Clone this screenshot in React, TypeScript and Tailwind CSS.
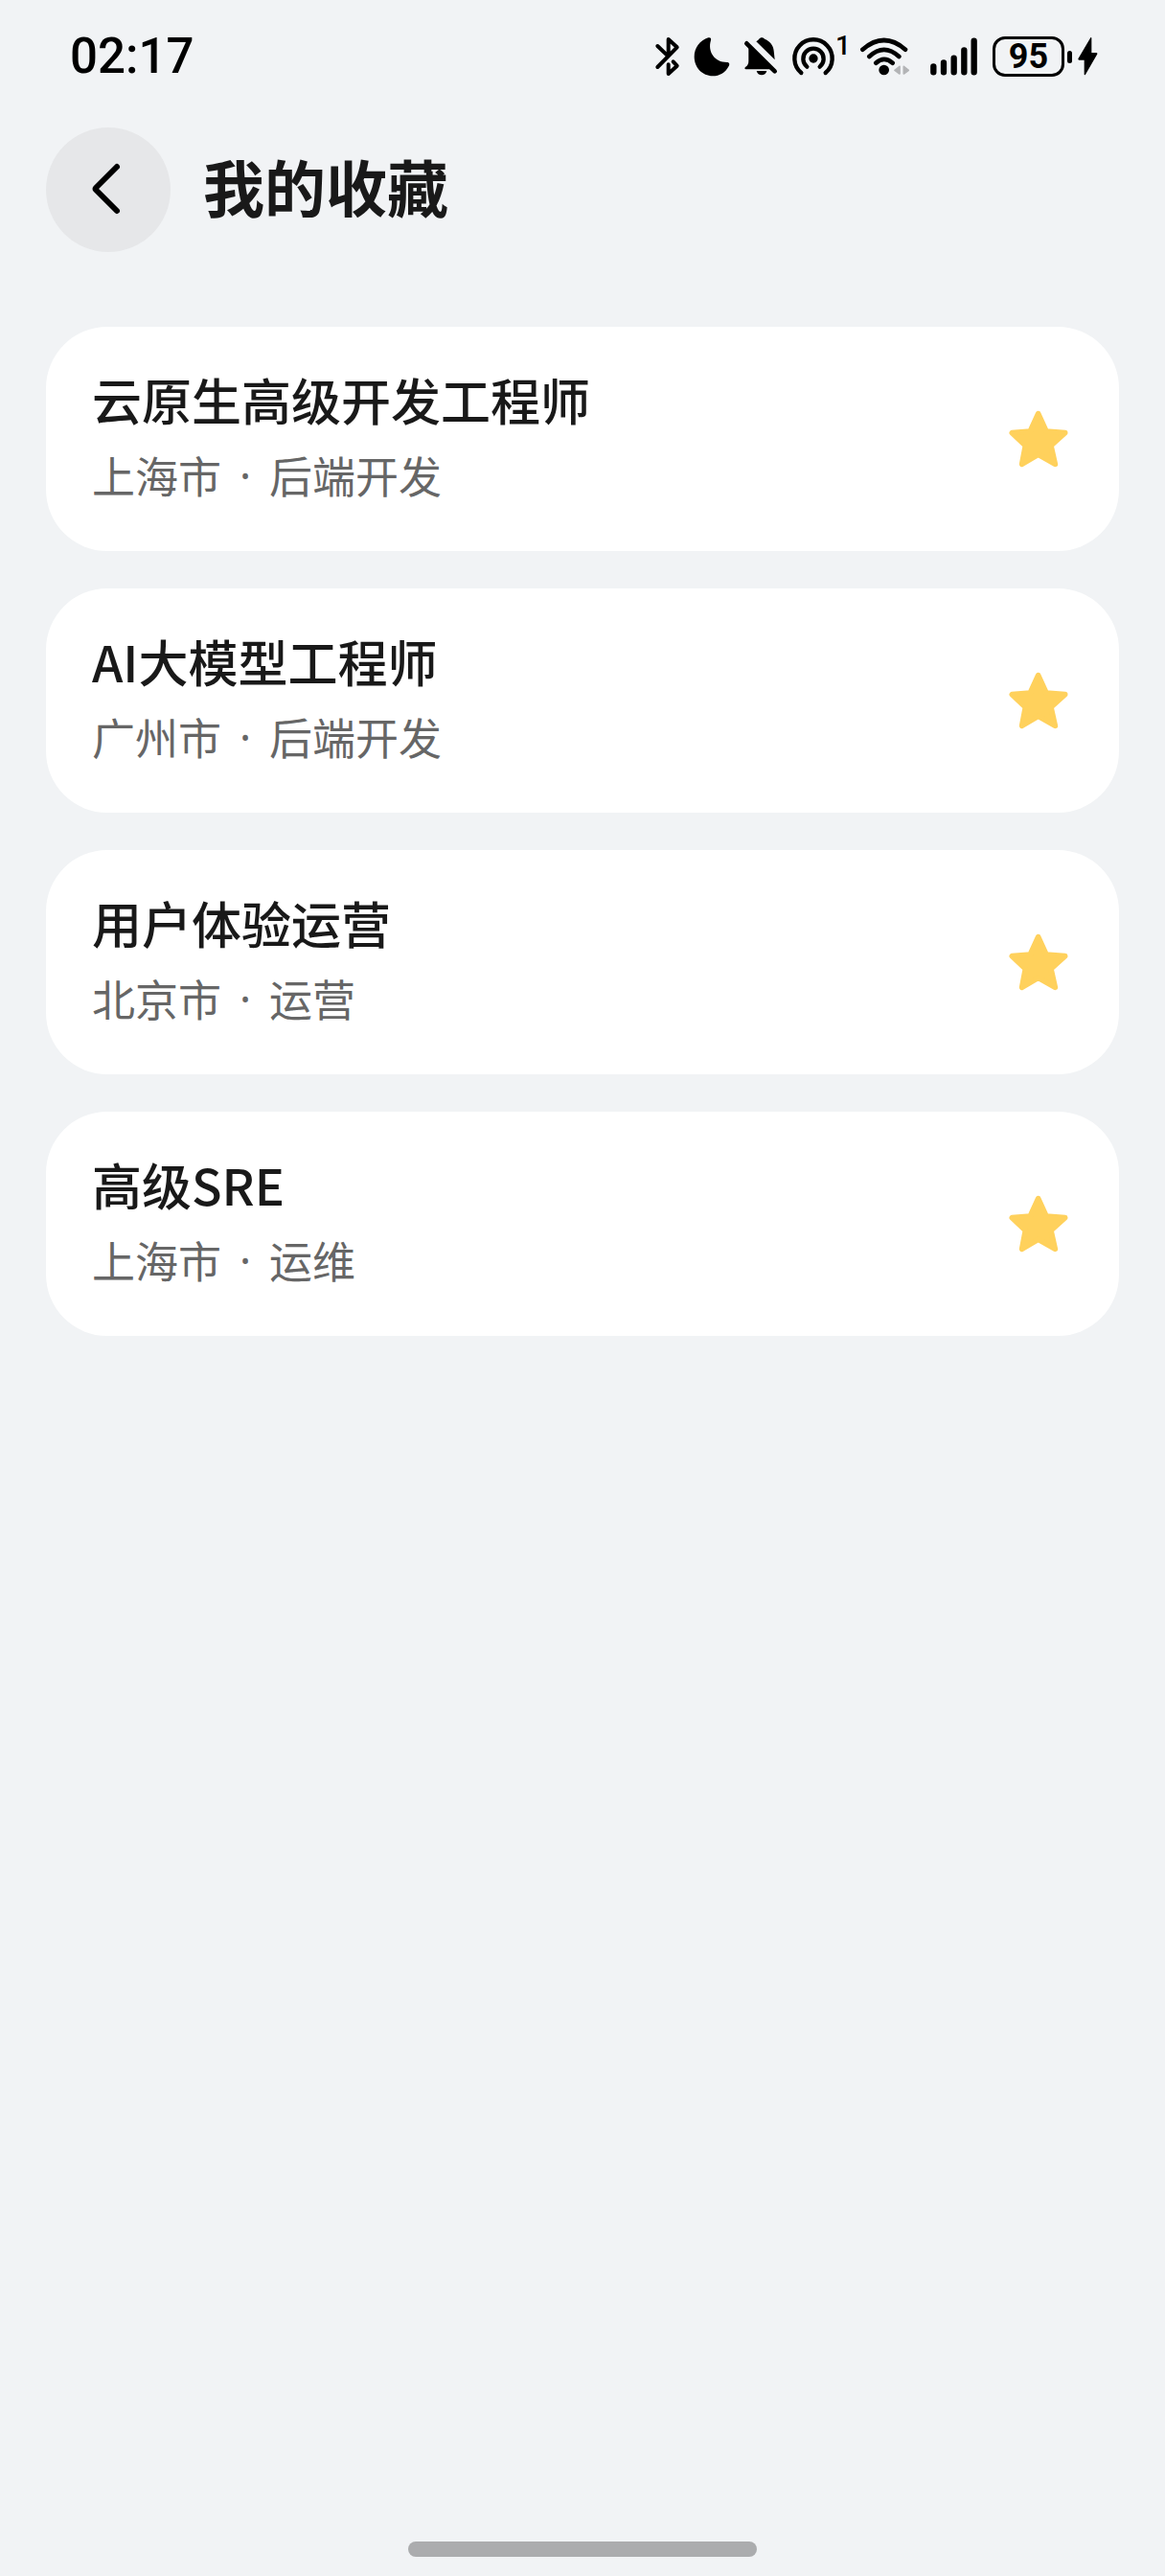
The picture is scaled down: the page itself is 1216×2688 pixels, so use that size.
const jobs = [
  { title: '云原生高级开发工程师', city: '上海市', field: '后端开发' },
  { title: 'AI大模型工程师', city: '广州市', field: '后端开发' },
  { title: '用户体验运营', city: '北京市', field: '运营' },
  { title: '高级SRE', city: '上海市', field: '运维' },
];

function StatusIcons() {
  return (
    <div className="flex h-[42px] items-center">
      <svg className="h-[42px] w-[27px]" viewBox="36 54 81 126" fill="none" stroke="#000" strokeWidth="12" strokeLinecap="round" strokeLinejoin="round" aria-label="蓝牙">
        <path d="M46 84L76 113M80 108V63L107 88L46 150M80 142V171L107 146L95 133" />
      </svg>
      <svg className="ml-[14px] h-[42px] w-[38px]" viewBox="159 54 114 126" aria-label="勿扰">
        <path d="M205 58C211 56 215 60 213 66C202 101 224 135 263 135C270 135 273 140 269 147C259 167 240 178 219 178C186 178 161 151 161 118C161 90 179 66 205 58Z" />
      </svg>
      <svg className="ml-[14px] h-[42px] w-[36px]" viewBox="315 54 108 126" aria-label="静音">
        <path d="M331 87L401 157H323C318 157 318 151 322 149C328 145 331 139 331 131Z" />
        <path d="M355 70C359 67 362 65 364 62C367 56 378 56 381 62C397 68 409 82 410 99L413 127Z" />
        <path d="M356 162H388C385 179 359 179 356 162Z" />
        <path d="M325 76L413 163" stroke="#000" strokeWidth="14" strokeLinecap="round" />
      </svg>
      <svg className="ml-[14px] h-[42px] w-[46px]" viewBox="465 54 138 126" fill="none" stroke="#000" strokeWidth="13" strokeLinecap="round" aria-label="热点">
        <path d="M496 168A59 59 0 1 1 572 168" />
        <path d="M514 149A32 32 0 1 1 554 149" />
        <circle cx="534" cy="123" r="14" fill="#000" stroke="none" />
      </svg>
      <span className="w-2.5 self-start font-['Roboto'] text-[28px] leading-[20px] font-medium">1</span>
      <svg className="ml-[15px] h-[42px] w-[52px]" viewBox="18 54 156 126" fill="none" stroke="#000" strokeWidth="14" strokeLinecap="round" aria-label="无线网络">
        <path d="M28 95Q95 37 162 95M49 117Q95 74 142 117M70 137Q95 114 122 137" />
        <circle cx="95" cy="159" r="16" fill="#000" stroke="none" />
        <path d="M144 148V171L129 160ZM157 148V171L172 160Z" fill="#b3b4b6" stroke="#b3b4b6" strokeWidth="5" strokeLinejoin="round" />
      </svg>
      <svg className="ml-[22px] h-[42px] w-[49px]" viewBox="240 54 147 126" stroke="#000" strokeWidth="19" strokeLinecap="round" aria-label="信号">
        <path d="M250 148V166M282 136V166M314 122V166M346 97V166M377 68V166" />
      </svg>
      <div className="ml-4 flex h-[42px] w-[75px] items-center justify-center rounded-[13px] border-3 border-black font-['Roboto'] text-[36px] leading-[36px] font-bold">
        95
      </div>
      <div className="ml-[3px] h-[13px] w-[5px] rounded-full bg-black" />
      <svg className="ml-[6px] h-[42px] w-[21px]" viewBox="705 54 63 126" aria-label="充电中">
        <path d="M745 58Q748 56 748 60V105H763Q768 106 765 111L729 173Q725 177 725 172V128H709Q704 127 707 122Z" />
      </svg>
    </div>
  );
}

function StarIcon() {
  return (
    <svg className="size-[72px]" viewBox="84 66 216 216" aria-hidden="true">
      <path
        d="M191 95L216 150L275 155L231 195L244 253L191 223L140 253L151 195L109 155L166 150Z"
        fill="#ffd15c"
        stroke="#ffd15c"
        strokeWidth="17"
        strokeLinejoin="round"
      />
    </svg>
  );
}

export default function App() {
  return (
    <div className="flex min-h-screen flex-col bg-[#f1f3f5] font-['Noto_Sans_CJK_SC',sans-serif] text-[#191919]">
      <div className="flex h-[118px] items-center justify-between pr-[70px] pl-[73px] text-black">
        <time className="font-['Roboto'] text-[51px] leading-[60px] font-medium">02:17</time>
        <StatusIcons />
      </div>

      <header className="flex items-center gap-[34px] px-12 pt-[15px]">
        <button type="button" aria-label="返回" className="flex size-[130px] items-center justify-center rounded-full bg-[#e6e7e9]">
          <svg className="size-[72px]" viewBox="0 0 72 72" fill="none" stroke="#000" strokeWidth="6" strokeLinecap="round" strokeLinejoin="round" aria-hidden="true">
            <path d="M45 12L23 34Q22 35 23 36L45 58" />
          </svg>
        </button>
        <h1 className="pb-2.5 text-[64px] leading-[84px] font-bold">我的收藏</h1>
      </header>

      <main className="flex-1 px-12 pt-[78px]">
        <ul className="flex flex-col gap-[39px]">
          {jobs.map((job) => (
            <li key={job.title} className="flex items-center justify-between rounded-[64px] bg-white px-12 py-10">
              <div className="flex flex-col gap-2 pb-1">
                <h2 className="text-[52px] leading-[72px] font-medium">{job.title}</h2>
                <p className="flex text-[45px] leading-[70px] text-[#666666]">
                  <span>{job.city}</span>
                  <span className="w-[50px] text-center font-['Noto_Sans']">·</span>
                  <span>{job.field}</span>
                </p>
              </div>
              <button type="button" aria-label={`取消收藏 ${job.title}`}>
                <StarIcon />
              </button>
            </li>
          ))}
        </ul>
      </main>

      <div className="flex justify-center pb-5">
        <div className="h-4 w-[364px] rounded-full bg-[#abacae]" />
      </div>
    </div>
  );
}
